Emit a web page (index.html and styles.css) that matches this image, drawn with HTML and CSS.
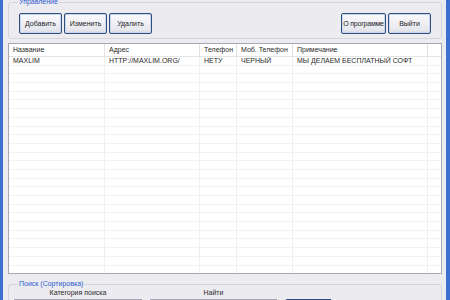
FILE: index.html
```html
<!DOCTYPE html>
<html lang="ru">
<head>
    <meta charset="UTF-8">
    <title>Записная книжка</title>
    <link rel="stylesheet" href="styles.css">
</head>
<body>
    <div class="window">
        <fieldset class="group group-top">
            <legend>Управление</legend>
            <div class="toolbar">
                <div class="btn-row">
                    <button class="btn">Добавить</button>
                    <button class="btn">Изменить</button>
                    <button class="btn">Удалить</button>
                </div>
                <div class="btn-row">
                    <button class="btn btn-wide">О программе</button>
                    <button class="btn">Выйти</button>
                </div>
            </div>
        </fieldset>

        <div class="list">
            <div class="list-row list-head">
                <div class="cell">Название</div>
                <div class="cell">Адрес</div>
                <div class="cell">Телефон</div>
                <div class="cell">Моб. Телефон</div>
                <div class="cell">Примечание</div>
                <div class="cell"></div>
            </div>
            <div class="list-row">
                <div class="cell">MAXLIM</div>
                <div class="cell">HTTP://MAXLIM.ORG/</div>
                <div class="cell">НЕТУ</div>
                <div class="cell">ЧЕРНЫЙ</div>
                <div class="cell">МЫ ДЕЛАЕМ БЕСПЛАТНЫЙ СОФТ</div>
                <div class="cell"></div>
            </div>
            <div id="emptyRows"></div>
        </div>

        <fieldset class="group group-bottom">
            <legend>Поиск (Сортировка)</legend>
            <div class="search">
                <label class="search-label" for="category">Категория поиска</label>
                <label class="search-label" for="query">Найти</label>
                <span></span>
                <input class="field" id="category" type="text">
                <input class="field" id="query" type="text">
                <button class="btn btn-search" title="Искать"></button>
            </div>
        </fieldset>
    </div>

    <script>
        // empty rows of the list view
        const emptyRows = document.getElementById('emptyRows');
        for (let i = 0; i < 26; i++) {
            const row = document.createElement('div');
            row.className = 'list-row';
            for (let j = 0; j < 6; j++) {
                const cell = document.createElement('div');
                cell.className = 'cell';
                row.appendChild(cell);
            }
            emptyRows.appendChild(row);
        }
    </script>
</body>
</html>
```

FILE: styles.css
```css
* {
    margin: 0;
    padding: 0;
    box-sizing: border-box;
}

body {
    background: #ecebef;
    font-family: "Liberation Sans", Arial, sans-serif;
    font-size: 7px;
    color: #2a2a2a;
    overflow: hidden;
}

.window {
    width: 450px;
    height: 300px;
    border-left: 3px solid #3d6fd0;
    border-right: 4px solid #3d6fd0;
    padding: 0 4px 0 5px;
    overflow: hidden;
}

/* group boxes */
.group {
    border: 1px solid #d6d4dc;
    border-radius: 3px;
    padding: 0 10px 0 5px;
}

.group legend {
    color: #2f5ccf;
    line-height: 8px;
    padding: 0 1px;
    margin-left: 4px;
}

.group-top {
    margin-top: -2px;
    height: 41px;
}

.toolbar {
    display: flex;
    justify-content: space-between;
    padding-top: 7px;
    padding-left: 5px;
}

.btn-row {
    display: flex;
    gap: 2px;
}

.btn {
    width: 43px;
    height: 21px;
    padding: 0;
    white-space: nowrap;
    font-family: inherit;
    font-size: 7px;
    color: #1e1e1e;
    border: 1px solid #2f4f7f;
    border-radius: 2px;
    background: linear-gradient(#fbfbfd, #e6e6ee 85%, #d6d6e0);
    box-shadow: inset 0 0 0 1px #c9d6ec;
}

.btn-wide {
    width: 45px;
    letter-spacing: -0.2px;
}

/* list view */
.list {
    margin-top: 4px;
    height: 231px;
    background: #fff;
    border: 1px solid #a9a8b2;
    overflow: hidden;
}

.list-row {
    display: grid;
    grid-template-columns: 96px 95px 37px 56px 135px 1fr;
    height: 8.7px;
    border-bottom: 1px solid #f2f2f2;
}

.list-head {
    height: 13px;
    border-bottom: 1px solid #e4e4e4;
}

.cell {
    border-right: 1px solid #eeeeee;
    padding-left: 4px;
    line-height: 8px;
    white-space: nowrap;
    overflow: hidden;
}

.cell:last-child {
    border-right: none;
}

.list-head .cell {
    line-height: 12px;
    border-right-color: #e2e2e2;
}

/* search */
.group-bottom {
    margin-top: 6px;
    height: 40px;
}

.search {
    display: grid;
    grid-template-columns: 128px 127px 47px;
    column-gap: 8px;
    row-gap: 2px;
    padding-top: 1px;
}

.search-label {
    text-align: center;
    line-height: 8px;
}

.field {
    height: 18px;
    border: 1px solid #a5a5b5;
    background: #fff;
}

.btn-search {
    width: 47px;
    height: 20px;
}
```
